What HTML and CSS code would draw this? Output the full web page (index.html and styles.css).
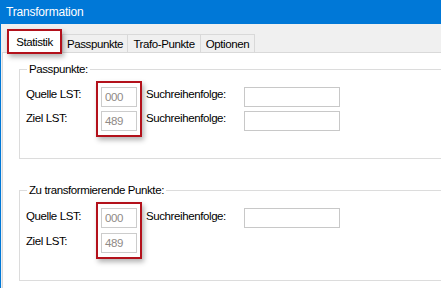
FILE: index.html
```html
<!DOCTYPE html>
<html lang="de">
<head>
  <meta charset="UTF-8" />
  <title>Transformation</title>
  <link rel="stylesheet" href="styles.css">
</head>
<body>
  <div class="window">
    <div class="titlebar">Transformation</div>
    <div class="client">
      <div class="tabs">
        <div class="tab active">Statistik</div>
        <div class="tab tab-pass">Passpunkte</div>
        <div class="tab tab-trafo">Trafo-Punkte</div>
        <div class="tab tab-opt">Optionen</div>
      </div>

      <div class="panel">
        <div class="group">
          <div class="legend">Passpunkte:</div>
          <div class="fields">
            <label class="lbl">Quelle LST:</label>
            <div class="lst">
              <div class="box ro">000</div>
              <div class="box ro">489</div>
            </div>
            <label class="lbl search">Suchreihenfolge:</label>
            <div class="box edit"></div>
            <label class="lbl">Ziel LST:</label>
            <label class="lbl search">Suchreihenfolge:</label>
            <div class="box edit"></div>
          </div>
        </div>

        <div class="group second">
          <div class="legend">Zu transformierende Punkte:</div>
          <div class="fields">
            <label class="lbl">Quelle LST:</label>
            <div class="lst">
              <div class="box ro">000</div>
              <div class="box ro">489</div>
            </div>
            <label class="lbl search">Suchreihenfolge:</label>
            <div class="box edit"></div>
            <label class="lbl">Ziel LST:</label>
          </div>
        </div>
      </div>
    </div>
  </div>
</body>
</html>
```

FILE: styles.css
```css
* {
  margin: 0;
  padding: 0;
  box-sizing: border-box;
}
body {
  font-family: 'Liberation Sans', Arial, sans-serif;
  font-size: 11.5px;
  letter-spacing: -0.4px;
  color: #000;
  background: #fff;
  overflow: hidden;
}
.window {
  height: 288px;
  border-left: 1px solid #0078d7;
  display: flex;
  flex-direction: column;
}
.titlebar {
  height: 24px;
  line-height: 24px;
  padding-left: 5px;
  background: #0078d7;
  color: #fff;
  font-size: 12px;
  letter-spacing: -0.2px;
}
.client {
  flex: 1;
  background: #f0f0f0;
  padding-left: 1px;
  display: flex;
  flex-direction: column;
}
.tabs {
  display: flex;
  align-items: flex-end;
  height: 28px;
  padding: 5px 0 0 5px;
}
.tab {
  height: 18px;
  display: flex;
  align-items: center;
  justify-content: center;
  border-top: 1px solid #d9d9d9;
  border-left: 1px solid #d9d9d9;
  background: #f0f0f0;
}
.tab-pass {
  width: 65px;
}
.tab-trafo {
  width: 73px;
}
.tab-opt {
  width: 55px;
  border-right: 1px solid #d9d9d9;
}
.tab.active {
  position: relative;
  z-index: 1;
  width: 55px;
  height: 25px;
  margin-bottom: -2px;
  border: 2px solid #b3111b;
  background: #fff;
  box-shadow: 2px 3px 5px rgba(0, 0, 0, 0.3);
}
.panel {
  flex: 1;
  background: #fff;
  border-top: 1px solid #d9d9d9;
  border-left: 1px solid #d9d9d9;
  padding: 16px 0 0 16px;
}
.group {
  border: 1px solid #dcdcdc;
  border-right: none;
  padding: 0 0 27px 6px;
}
.group.second {
  margin-top: 31px;
}
.legend {
  width: fit-content;
  margin: -7px 0 0 1px;
  padding: 0 2px;
  line-height: 13px;
  background: #fff;
}
.fields {
  display: grid;
  grid-template-columns: 75px 36px 107px 96px;
  grid-template-rows: 20px 20px;
  row-gap: 4px;
  margin-top: 11px;
}
.second .fields {
  row-gap: 5px;
}
.lbl {
  line-height: 15px;
}
.second .lbl {
  line-height: 17px;
}
.search {
  padding-left: 9px;
}
.lst {
  grid-row: span 2;
  display: flex;
  flex-direction: column;
  gap: 4px;
  margin: -6px -5px;
  padding: 4px 3px;
  border: 2px solid #b3111b;
  box-shadow: 2px 3px 5px rgba(0, 0, 0, 0.3);
}
.second .lst {
  gap: 5px;
}
.box {
  height: 20px;
  border: 1px solid #cccccc;
  background: #fff;
}
.ro {
  padding-left: 3px;
  line-height: 18px;
  color: #8f8a86;
}
.edit {
  border-color: #c8c8c8;
}
```
